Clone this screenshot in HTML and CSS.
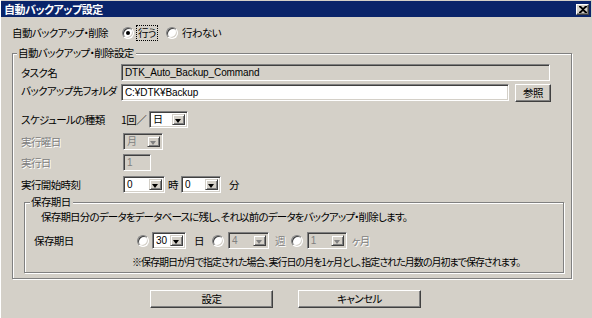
FILE: index.html
```html
<!DOCTYPE html>
<html lang="ja">
<head>
<meta charset="utf-8">
<link rel="stylesheet" href="styles.css">
</head>
<body>
<div class="window">
  <div class="titlebar">
    <span class="title">自動バックアップ設定</span>
    <span class="close"><svg width="8" height="7" viewBox="0 0 8 7"><path d="M0 0h2l2 2 2-2h2v1L5 3.5 8 6v1H6L4 5 2 7H0V6l3-2.5L0 1z" fill="#000"/></svg></span>
  </div>

  <div class="mode-row">
    <span class="mode-label">自動バックアップ・削除</span>
    <span class="radio checked"></span><span class="opt focus">行う</span>
    <span class="radio r2"></span><span class="opt">行わない</span>
  </div>

  <div class="group main">
    <span class="legend">自動バックアップ・削除設定</span>

    <div class="row r-task">
      <span class="lbl">タスク名</span>
      <div class="field readonly w-task">DTK_Auto_Backup_Command</div>
    </div>

    <div class="row r-folder">
      <span class="lbl">バックアップ先フォルダ</span>
      <div class="field w-folder">C:¥DTK¥Backup</div>
      <div class="btn btn-ref">参照</div>
    </div>

    <div class="row r-sched">
      <span class="lbl">スケジュールの種類</span>
      <span class="once">1回／</span>
      <div class="combo w-day"><span class="val">日</span><span class="arrow"></span></div>
    </div>

    <div class="row r-week">
      <span class="lbl dis">実行曜日</span>
      <div class="combo disabled w-week shift"><span class="val">月</span><span class="arrow"></span></div>
    </div>

    <div class="row r-dayn">
      <span class="lbl dis">実行日</span>
      <div class="field disabled w-dayn shift">1</div>
    </div>

    <div class="row r-time">
      <span class="lbl">実行開始時刻</span>
      <div class="combo w-hour shift"><span class="val">0</span><span class="arrow"></span></div>
      <span class="unit u-hour">時</span>
      <div class="combo w-min"><span class="val">0</span><span class="arrow"></span></div>
      <span class="unit u-min">分</span>
    </div>

    <div class="group keep">
      <span class="legend">保存期日</span>
      <p class="desc">保存期日分のデータをデータベースに残し、それ以前のデータをバックアップ・削除します。</p>
      <div class="row r-keep">
        <span class="lbl keep-lbl">保存期日</span>
        <span class="radio"></span>
        <div class="combo w-k1 gap3"><span class="val">30</span><span class="arrow"></span></div>
        <span class="unit u-day">日</span>
        <span class="radio rk2"></span>
        <div class="combo disabled w-k2 gap4"><span class="val">4</span><span class="arrow"></span></div>
        <span class="unit dis u-week">週</span>
        <span class="radio rk3"></span>
        <div class="combo disabled w-k3 gap4"><span class="val">1</span><span class="arrow"></span></div>
        <span class="unit dis u-month">ヶ月</span>
      </div>
      <p class="note">※保存期日が月で指定された場合、実行日の月を1ヶ月とし、指定された月数の月初まで保存されます。</p>
    </div>
  </div>

  <div class="buttons">
    <div class="btn btn-main">設定</div>
    <div class="btn btn-main">キャンセル</div>
  </div>
</div>
</body>
</html>
```

FILE: styles.css
```css
* { box-sizing: border-box; }
html, body {
  margin: 0;
  padding: 0;
  width: 592px;
  height: 318px;
  overflow: hidden;
  background: #d4d0c8;
}
body {
  font-family: "Noto Sans CJK JP", "Noto Sans", sans-serif;
  font-size: 10.5px;
  letter-spacing: -0.6px;
  line-height: 14px;
  font-feature-settings: "palt";
  color: #000;
  white-space: nowrap;
}
.window {
  width: 592px;
  height: 318px;
  padding-top: 1px;
  border-left: 1px solid #fff;
}
.titlebar {
  height: 16px;
  margin: 0 1px 0 0;
  background: #0a246a;
  display: flex;
  align-items: center;
  justify-content: space-between;
  padding: 0 2px 0 3px;
}
.title {
  color: #fff;
  font-weight: bold;
  font-size: 11px;
  letter-spacing: -0.5px;
  line-height: 14px;
}
.close {
  width: 13px;
  height: 11px;
  background: #d4d0c8;
  border: 1px solid;
  border-color: #fff #404040 #404040 #fff;
  box-shadow: inset -1px -1px 0 #808080;
  display: flex;
  align-items: center;
  justify-content: center;
}
.close svg { display: block; }

.mode-row {
  margin-top: 8px;
  height: 16px;
  display: flex;
  align-items: center;
  padding-left: 11px;
}
.mode-label { width: 110px; }
.radio {
  flex: none;
  width: 12px;
  height: 12px;
  border-radius: 50%;
  background: #fff;
  border: 1px solid;
  border-color: #808080 #fff #fff #808080;
  box-shadow: inset 1px 1px 0 #404040, inset -1px -1px 0 #d4d0c8;
  position: relative;
}
.radio.checked::after {
  content: "";
  position: absolute;
  left: 3px;
  top: 3px;
  width: 4px;
  height: 4px;
  border-radius: 50%;
  background: #000;
}
.opt { margin-left: 2px; padding: 0 1px; border: 1px solid transparent; }
.opt.focus { border: 1px dotted #000; }
.r2 { margin-left: 8px; }

.group {
  position: relative;
  border: 1px solid #808080;
  box-shadow: inset 1px 1px 0 #fff, 1px 1px 0 #fff;
}
.legend {
  position: absolute;
  top: -8px;
  background: #d4d0c8;
  padding: 0 2px 0 1px;
  line-height: 14px;
}
.main {
  margin: 12px 0 0 11px;
  width: 560px;
  padding: 10px 0 5px 8px;
}
.main > .legend { left: 4px; }

.row {
  display: flex;
  align-items: center;
}
.lbl { width: 100px; flex: none; }
.dis { color: #808080; text-shadow: 1px 1px 0 #fff; }

.field {
  height: 17px;
  background: #fff;
  border: 1px solid;
  border-color: #808080 #fff #fff #808080;
  box-shadow: inset 1px 1px 0 #404040, inset -1px -1px 0 #d4d0c8;
  padding: 1px 3px 0;
  line-height: 14px;
  font-family: "Liberation Sans", "Noto Sans CJK JP", sans-serif;
  font-size: 10px;
  letter-spacing: -0.1px;
}
.field.readonly, .field.disabled { background: #d4d0c8; }
.field.disabled { color: #808080; }

.r-task { height: 17px; }
.w-task { width: 429px; }
.r-folder { margin-top: 3px; height: 18px; align-items: flex-start; }
.w-folder { width: 388px; }
.btn {
  background: #d4d0c8;
  border: 1px solid;
  border-color: #fff #404040 #404040 #fff;
  box-shadow: inset -1px -1px 0 #808080;
  display: flex;
  align-items: center;
  justify-content: center;
  line-height: 14px;
}
.btn-ref { width: 36px; height: 18px; margin-left: 6px; }

.r-sched { margin-top: 9px; height: 17px; }
.once { width: 28px; }
.combo {
  height: 17px;
  background: #fff;
  border: 1px solid;
  border-color: #808080 #fff #fff #808080;
  box-shadow: inset 1px 1px 0 #404040, inset -1px -1px 0 #d4d0c8;
  padding: 2px;
  display: flex;
  align-items: stretch;
  justify-content: space-between;
}
.combo .val {
  padding-left: 1px;
  line-height: 12px;
  font-family: "Liberation Sans", "Noto Sans CJK JP", sans-serif;
  font-size: 10px;
  letter-spacing: 0;
}
.combo .arrow {
  width: 13px;
  background: #d4d0c8;
  border: 1px solid;
  border-color: #d4d0c8 #404040 #404040 #d4d0c8;
  box-shadow: inset 1px 1px 0 #fff, inset -1px -1px 0 #808080;
  position: relative;
}
.combo .arrow::after {
  content: "";
  position: absolute;
  left: 2px;
  top: 4px;
  border-left: 3.5px solid transparent;
  border-right: 3.5px solid transparent;
  border-top: 4px solid #000;
}
.combo.disabled { background: #d4d0c8; }
.combo.disabled .val { color: #808080; }
.combo.disabled .arrow::after { border-top-color: #808080; }

.w-day { width: 39px; }
.shift { margin-left: 2px; }
.r-week { margin-top: 5px; height: 17px; }
.w-week { width: 40px; }
.r-dayn { margin-top: 4px; height: 17px; }
.w-dayn { width: 28px; }
.r-time { margin-top: 5px; height: 17px; }
.w-hour { width: 42px; }
.u-hour { margin: 0 3px 0 3px; }
.w-min { width: 40px; }
.u-min { margin-left: 8px; }

.keep {
  margin: 9px 0 0 3px;
  width: 540px;
  padding: 7px 0 3px 9px;
}
.keep > .legend { left: 5px; }
.desc { margin: 0 0 0 7px; height: 14px; letter-spacing: -0.8px; }
.r-keep { margin-top: 8px; height: 17px; }
.keep-lbl { width: 103px; }
.gap3 { margin-left: 3px; }
.gap4 { margin-left: 4px; }
.w-k1 { width: 34px; }
.u-day { margin-left: 8px; }
.rk2 { margin-left: 8px; }
.w-k2 { width: 41px; }
.u-week { margin-left: 6px; }
.rk3 { margin-left: 6px; }
.w-k3 { width: 40px; }
.u-month { margin-left: 5px; }
.note { margin: 6px 0 0 98px; height: 14px; font-size: 10px; letter-spacing: -1px; }

.buttons {
  margin: 11px 0 0 149px;
  display: flex;
  gap: 25px;
}
.btn-main { width: 123px; height: 18px; }
```
